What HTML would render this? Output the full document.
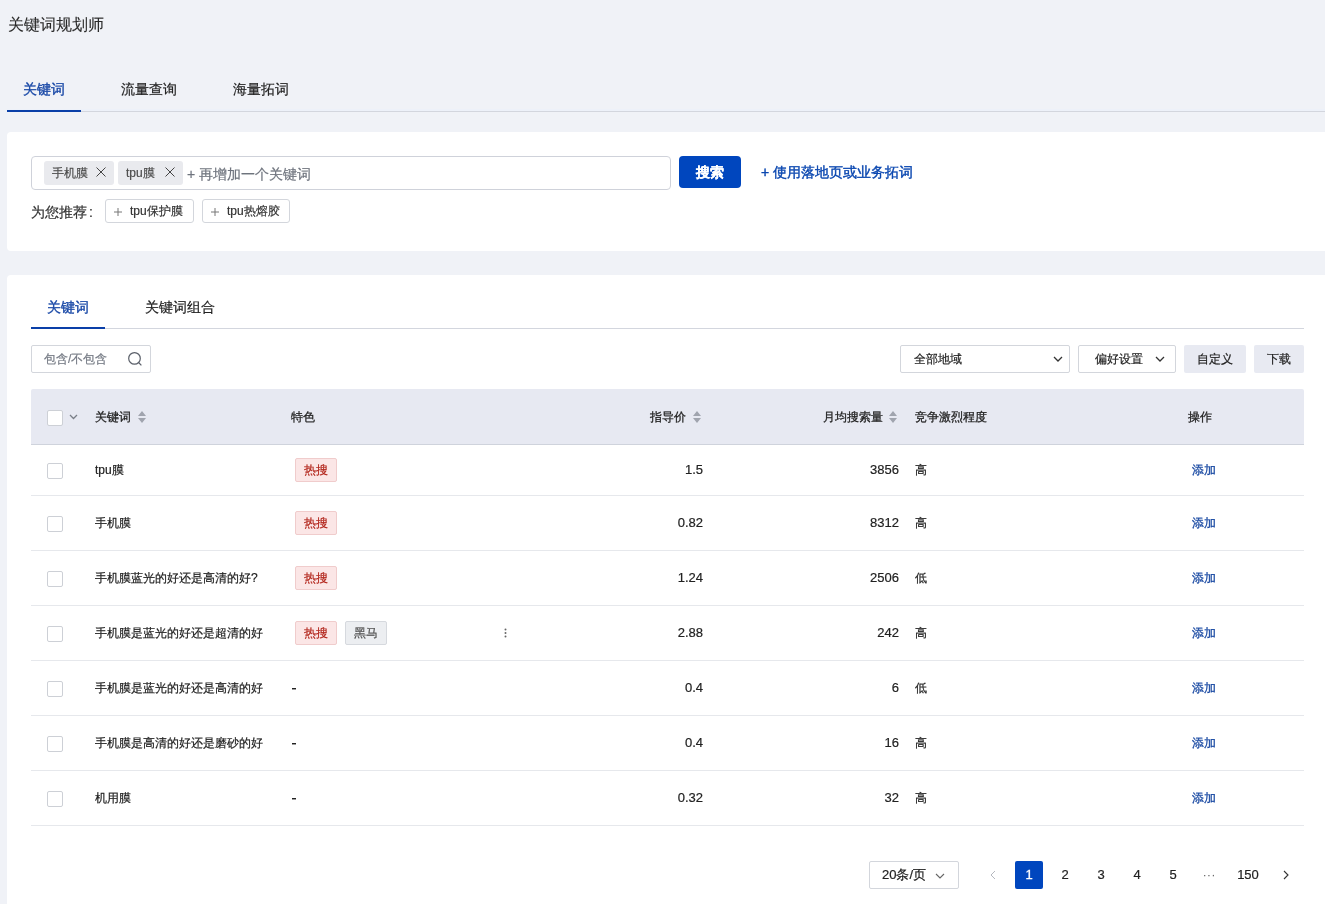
<!DOCTYPE html>
<html><head><meta charset="utf-8">
<style>
*{box-sizing:border-box;margin:0;padding:0}
html,body{width:1325px;height:904px;overflow:hidden}
body{background:#f0f2f7;font-family:"Liberation Sans",sans-serif;color:#1f2329;position:relative;will-change:transform}
.a{position:absolute;white-space:nowrap;-webkit-text-stroke:0.2px currentColor}
.title{left:8px;top:17px;font-size:16px;line-height:16px;color:#2a2a2a;-webkit-text-stroke:0.1px currentColor}
.ttab{top:82px;font-size:14px;line-height:14px;color:#222}
.ttab.on{color:#1747a6;-webkit-text-stroke:0.35px currentColor}
.tline{left:7px;top:111px;width:1318px;height:1px;background:#d3d6de}
.tul{left:7px;top:110px;width:74px;height:2px;background:#0a3fa8}
.card{left:7px;background:#fff;border-radius:4px 0 0 4px}
.inp{left:31px;top:156px;width:640px;height:34px;border:1px solid #cfd2da;border-radius:4px;background:#fff}
.ktag{top:161px;height:24px;background:#e9eaee;border-radius:3px;font-size:12px;line-height:24px;color:#4d4d4d;padding-left:8px}
.kx{position:absolute;top:6px;width:10px;height:10px}
.ph{left:187px;top:167px;font-size:14px;line-height:14px;color:#6f747e}
.btn{left:679px;top:156px;width:62px;height:32px;background:#0046be;border-radius:4px;color:#fff;font-weight:bold;font-size:14px;line-height:32px;text-align:center}
.link{left:761px;top:165px;font-size:14px;line-height:14px;color:#0a47b0;-webkit-text-stroke:0.4px #0a47b0}
.rec{left:31px;top:205px;font-size:14px;line-height:14px;color:#333}
.chip{top:199px;height:24px;border:1px solid #d3d6dc;border-radius:3px;font-size:12px;line-height:22px;color:#333;background:#fff}
.stab{top:300px;font-size:14px;line-height:14px;color:#222}
.stab.on{color:#1747a6;-webkit-text-stroke:0.35px currentColor}
.sline{left:31px;top:328px;width:1273px;height:1px;background:#d3d6de}
.sul{left:31px;top:327px;width:74px;height:2px;background:#0a3fa8}
.sinp{left:31px;top:345px;width:120px;height:28px;border:1px solid #d3d6dc;border-radius:2px;font-size:12px;line-height:26px;color:#767b85;padding-left:12px}
.sel{top:345px;height:28px;border:1px solid #d3d6dc;border-radius:2px;font-size:12px;line-height:26px;color:#222;background:#fff}
.gbtn{top:345px;height:28px;background:#e8eaf2;border-radius:2px;font-size:12px;line-height:28px;color:#222;text-align:center}
.thead{left:31px;top:389px;width:1273px;height:56px;background:#e7e9f2;border-bottom:1px solid #cfd3dc;border-radius:2px 2px 0 0}
.th{top:411px;font-size:12px;line-height:12px;color:#222;-webkit-text-stroke:0.28px #222}
.cb{left:47px;width:16px;height:16px;border:1px solid #cdd0d6;border-radius:2px;background:#fff}
.rowline{left:31px;width:1273px;height:1px;background:#e6e8ec}
.td{font-size:12px;line-height:12px;color:#222}
.num{text-align:right;font-size:13px}
.add{color:#1a4aa3;-webkit-text-stroke:0.3px currentColor}
.hot{height:24px;border:1px solid #f0cccc;background:#fbe6e6;color:#b3261c;border-radius:2px;font-size:12px;line-height:22px;padding:0 8px}
.dark{height:24px;border:1px solid #d6d9de;background:#eceef1;color:#505050;border-radius:2px;font-size:12px;line-height:22px;padding:0 8px}
.pg{top:861px;width:28px;height:28px;font-size:13px;line-height:28px;text-align:center;color:#222}
</style></head><body>
<div class="a title">关键词规划师</div>

<div class="a ttab on" style="left:23px">关键词</div>
<div class="a ttab" style="left:121px">流量查询</div>
<div class="a ttab" style="left:233px">海量拓词</div>
<div class="a" style="left:7px;top:109px;width:1318px;height:2px;background:#edf1f9"></div>
<div class="a tline"></div>
<div class="a tul"></div>

<div class="a card" style="top:132px;width:1318px;height:119px"></div>
<div class="a inp"></div>
<div class="a ktag" style="left:44px;width:70px">手机膜<svg class="kx" style="left:52px" viewBox="0 0 10 10"><path d="M0.5 0.5L9.5 9.5M9.5 0.5L0.5 9.5" stroke="#444" stroke-width="1" fill="none"/></svg></div>
<div class="a ktag" style="left:118px;width:65px">tpu膜<svg class="kx" style="left:47px" viewBox="0 0 10 10"><path d="M0.5 0.5L9.5 9.5M9.5 0.5L0.5 9.5" stroke="#444" stroke-width="1" fill="none"/></svg></div>
<div class="a ph">+ 再增加一个关键词</div>
<div class="a btn">搜索</div>
<div class="a link">+ 使用落地页或业务拓词</div>
<div class="a rec">为您推荐<span style="margin-left:2px">:</span></div>
<div class="a chip" style="left:105px;width:89px"><svg style="position:absolute;left:8px;top:8px" width="8" height="8" viewBox="0 0 8 8"><path d="M4 0V8M0 4H8" stroke="#777" stroke-width="1"/></svg><span style="position:absolute;left:24px">tpu保护膜</span></div>
<div class="a chip" style="left:202px;width:88px"><svg style="position:absolute;left:8px;top:8px" width="8" height="8" viewBox="0 0 8 8"><path d="M4 0V8M0 4H8" stroke="#777" stroke-width="1"/></svg><span style="position:absolute;left:24px">tpu热熔胶</span></div>

<div class="a card" style="top:275px;width:1318px;height:640px"></div>
<div class="a stab on" style="left:47px">关键词</div>
<div class="a stab" style="left:145px">关键词组合</div>
<div class="a sline"></div>
<div class="a sul"></div>
<div class="a sinp">包含/不包含<svg style="position:absolute;left:96px;top:6px" width="16" height="16" viewBox="0 0 16 16"><circle cx="6.5" cy="6.4" r="5.8" stroke="#5a5f69" stroke-width="1.2" fill="none"/><path d="M10.6 10.5L13.4 13.3" stroke="#5a5f69" stroke-width="1.2"/></svg></div>

<div class="a sel" style="left:900px;width:170px"><span style="position:absolute;left:13px">全部地域</span><svg style="position:absolute;left:152px;top:9.5px" width="10" height="7" viewBox="0 0 10 7"><path d="M1 1L5 5L9 1" stroke="#333" stroke-width="1.3" fill="none"/></svg></div>
<div class="a sel" style="left:1078px;width:98px"><span style="position:absolute;left:16px">偏好设置</span><svg style="position:absolute;left:76px;top:9.5px" width="10" height="7" viewBox="0 0 10 7"><path d="M1 1L5 5L9 1" stroke="#333" stroke-width="1.3" fill="none"/></svg></div>
<div class="a gbtn" style="left:1184px;width:62px">自定义</div>
<div class="a gbtn" style="left:1254px;width:50px">下载</div>

<div class="a thead"></div>
<div class="a cb" style="top:410px"></div>
<svg class="a" style="left:69px;top:414px" width="9" height="6" viewBox="0 0 9 6"><path d="M1 1L4.5 4.5L8 1" stroke="#7a7f88" stroke-width="1.3" fill="none"/></svg>
<div class="a th" style="left:95px">关键词</div>
<div class="a th" style="left:291px">特色</div>
<div class="a th" style="left:650px">指导价</div>
<div class="a th" style="left:823px">月均搜索量</div>
<div class="a th" style="left:915px">竞争激烈程度</div>
<div class="a th" style="left:1188px">操作</div>
<svg class="a" style="left:138px;top:411px" width="8" height="12" viewBox="0 0 8 12"><path d="M4 0L8 5H0Z M4 12L8 7H0Z" fill="#a0a4ae"/></svg>
<svg class="a" style="left:693px;top:411px" width="8" height="12" viewBox="0 0 8 12"><path d="M4 0L8 5H0Z M4 12L8 7H0Z" fill="#a0a4ae"/></svg>
<svg class="a" style="left:889px;top:411px" width="8" height="12" viewBox="0 0 8 12"><path d="M4 0L8 5H0Z M4 12L8 7H0Z" fill="#a0a4ae"/></svg>

<!--ROWS-->
<div class="a cb" style="top:463px"></div>
<div class="a td" style="left:95px;top:464px">tpu膜</div>
<div class="a hot" style="left:295px;top:458px">热搜</div>
<div class="a td num" style="left:603px;width:100px;top:464px">1.5</div>
<div class="a td num" style="left:799px;width:100px;top:464px">3856</div>
<div class="a td" style="left:915px;top:464px">高</div>
<div class="a td add" style="left:1192px;top:464px">添加</div>
<div class="a rowline" style="top:495px"></div>
<div class="a cb" style="top:516px"></div>
<div class="a td" style="left:95px;top:517px">手机膜</div>
<div class="a hot" style="left:295px;top:511px">热搜</div>
<div class="a td num" style="left:603px;width:100px;top:517px">0.82</div>
<div class="a td num" style="left:799px;width:100px;top:517px">8312</div>
<div class="a td" style="left:915px;top:517px">高</div>
<div class="a td add" style="left:1192px;top:517px">添加</div>
<div class="a rowline" style="top:550px"></div>
<div class="a cb" style="top:571px"></div>
<div class="a td" style="left:95px;top:572px">手机膜蓝光的好还是高清的好?</div>
<div class="a hot" style="left:295px;top:566px">热搜</div>
<div class="a td num" style="left:603px;width:100px;top:572px">1.24</div>
<div class="a td num" style="left:799px;width:100px;top:572px">2506</div>
<div class="a td" style="left:915px;top:572px">低</div>
<div class="a td add" style="left:1192px;top:572px">添加</div>
<div class="a rowline" style="top:605px"></div>
<div class="a cb" style="top:626px"></div>
<div class="a td" style="left:95px;top:627px">手机膜是蓝光的好还是超清的好</div>
<div class="a hot" style="left:295px;top:621px">热搜</div>
<div class="a dark" style="left:345px;top:621px">黑马</div>
<svg class="a" style="left:504px;top:628px" width="3" height="10" viewBox="0 0 3 10"><circle cx="1.5" cy="1.5" r="1" fill="#666"/><circle cx="1.5" cy="5" r="1" fill="#666"/><circle cx="1.5" cy="8.5" r="1" fill="#666"/></svg>
<div class="a td num" style="left:603px;width:100px;top:627px">2.88</div>
<div class="a td num" style="left:799px;width:100px;top:627px">242</div>
<div class="a td" style="left:915px;top:627px">高</div>
<div class="a td add" style="left:1192px;top:627px">添加</div>
<div class="a rowline" style="top:660px"></div>
<div class="a cb" style="top:681px"></div>
<div class="a td" style="left:95px;top:682px">手机膜是蓝光的好还是高清的好</div>
<div class="a" style="left:292px;top:688px;width:4px;height:1px;background:#222;box-shadow:0 1px 0 rgba(34,34,34,0.45)"></div>
<div class="a td num" style="left:603px;width:100px;top:682px">0.4</div>
<div class="a td num" style="left:799px;width:100px;top:682px">6</div>
<div class="a td" style="left:915px;top:682px">低</div>
<div class="a td add" style="left:1192px;top:682px">添加</div>
<div class="a rowline" style="top:715px"></div>
<div class="a cb" style="top:736px"></div>
<div class="a td" style="left:95px;top:737px">手机膜是高清的好还是磨砂的好</div>
<div class="a" style="left:292px;top:743px;width:4px;height:1px;background:#222;box-shadow:0 1px 0 rgba(34,34,34,0.45)"></div>
<div class="a td num" style="left:603px;width:100px;top:737px">0.4</div>
<div class="a td num" style="left:799px;width:100px;top:737px">16</div>
<div class="a td" style="left:915px;top:737px">高</div>
<div class="a td add" style="left:1192px;top:737px">添加</div>
<div class="a rowline" style="top:770px"></div>
<div class="a cb" style="top:791px"></div>
<div class="a td" style="left:95px;top:792px">机用膜</div>
<div class="a" style="left:292px;top:798px;width:4px;height:1px;background:#222;box-shadow:0 1px 0 rgba(34,34,34,0.45)"></div>
<div class="a td num" style="left:603px;width:100px;top:792px">0.32</div>
<div class="a td num" style="left:799px;width:100px;top:792px">32</div>
<div class="a td" style="left:915px;top:792px">高</div>
<div class="a td add" style="left:1192px;top:792px">添加</div>
<div class="a rowline" style="top:825px"></div>
<!--/ROWS-->

<div class="a sel" style="left:869px;top:861px;width:90px;height:28px;font-size:13px"><span style="position:absolute;left:12px">20条/页</span><svg style="position:absolute;left:65px;top:11px" width="10" height="6" viewBox="0 0 10 6"><path d="M1 1L5 5L9 1" stroke="#666" stroke-width="1.1" fill="none"/></svg></div>
<svg class="a" style="left:990px;top:870px" width="6" height="10" viewBox="0 0 6 10"><path d="M5 1L1 5L5 9" stroke="#b5b8bf" stroke-width="1" fill="none"/></svg>
<div class="a pg" style="left:1015px;background:#0046be;color:#fff;border-radius:2px;-webkit-text-stroke:0.3px #fff">1</div>
<div class="a pg" style="left:1051px">2</div>
<div class="a pg" style="left:1087px">3</div>
<div class="a pg" style="left:1123px">4</div>
<div class="a pg" style="left:1159px">5</div>
<div class="a pg" style="left:1195px;color:#6a6a6a;-webkit-text-stroke:0">···</div>
<div class="a pg" style="left:1231px;width:34px">150</div>
<svg class="a" style="left:1283px;top:870px" width="6" height="10" viewBox="0 0 6 10"><path d="M1 1L5 5L1 9" stroke="#333" stroke-width="1.1" fill="none"/></svg>
</body></html>
